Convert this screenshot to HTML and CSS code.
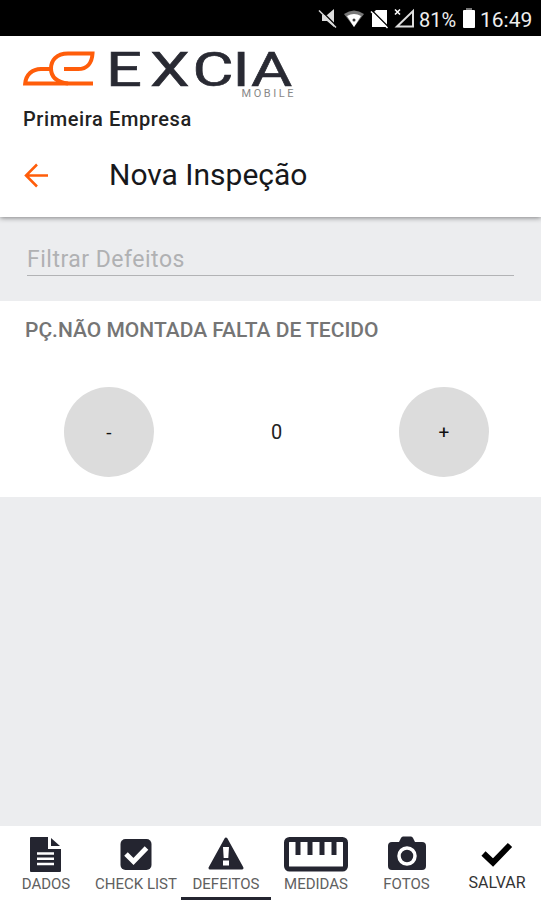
FILE: index.html
```html
<!DOCTYPE html>
<html lang="pt-BR">
  <head>
    <meta charset="UTF-8" />
    <meta name="viewport" content="width=device-width, initial-scale=1.0" />
    <title>Nova Inspeção</title>
    <link rel="stylesheet" href="styles.css">
  </head>
  <body>
    <div class="status-bar">
      <svg class="status-icons" width="99" height="24" viewBox="0 0 99 24">
        <path d="M3 7h5l7-6v18l-7-6H3z" fill="#ddd" />
        <path d="M1 1.500l17 17" stroke="#000" stroke-width="1.500" />
        <path d="M0 2.500l17 17" stroke="#ddd" stroke-width="1.500" />
        <path d="M25 6q10-7 20 0L35 19z" fill="#777" />
        <path d="M28 8q7-4 14 0l-7 11z" fill="#fff" />
        <circle cx="35" cy="12" r="1.5" fill="#333" />
        <path d="M57 2h11v17H53V6z" fill="#fff" />
        <path d="M53 2.500l17 17" stroke="#000" stroke-width="1.500" />
        <path d="M52 3.500l16.500 16.500" stroke="#fff" stroke-width="1.500" />
        <path d="M78 18.500L94 3v15.500z" fill="none" stroke="#ddd" stroke-width="2" />
        <path d="M76 1.500l5 5M81 1.500l-5 5" stroke="#fff" stroke-width="1.6" />
      </svg>
      <span class="battery-level">81%</span>
      <svg class="battery" width="12" height="20" viewBox="0 0 12 20">
        <path d="M3 0h6v3H3z" fill="#777" />
        <rect y="2" width="12" height="18" rx="1" fill="#fff" />
      </svg>
      <span class="clock">16:49</span>
    </div>

    <header class="header">
      <svg class="logo" width="290" height="52" viewBox="0 0 290 52">
        <g fill="none" stroke="#ff5d0a" stroke-width="4">
          <path d="M70 37.500H2.200C3 29 9 23 18 23h10" />
          <path d="M45 37.500C33 36 28 30 28 22.500S33 7.500 45 7.500h24.500C69 17 64 23 55 23H41" />
        </g>
        <g class="logo-name" transform="translate(0 39.500) scale(1.33 1)">
          <text x="62.500 95.500 127.500 157.500 171.500">EXCIA</text>
        </g>
        <text class="logo-sub" x="218.500" y="51" textLength="52">MOBILE</text>
      </svg>
      <p class="company">Primeira Empresa</p>
      <div class="title-row">
        <svg width="25" height="25" viewBox="0 0 25 25" fill="none" stroke="#ff5d0a" stroke-width="2.500">
          <path d="M13 1.500L2 12.500L13 23.500M2 12.500h22" />
        </svg>
        <h1>Nova Inspeção</h1>
      </div>
    </header>

    <main>
      <div class="filter">
        <input type="text" placeholder="Filtrar Defeitos" />
      </div>

      <section class="defect">
        <h2>PÇ.NÃO MONTADA FALTA DE TECIDO</h2>
        <div class="counter">
          <button onclick="changeCount(-1)">-</button>
          <span id="count">0</span>
          <button onclick="changeCount(1)">+</button>
        </div>
      </section>
    </main>

    <nav class="tabs">
      <div class="tab">
        <svg width="32" height="36" viewBox="0 0 32 36">
          <path d="M1 1h17v12h13v22q0 1-1 1H1q-1 0-1-1V2q0-1 1-1z" fill="#242530" />
          <path d="M21 2v8h9z" fill="#242530" />
          <path d="M7 17.500h17M7 22.800h17M7 28h17" stroke="#fff" stroke-width="2.500" />
        </svg>
        <span>DADOS</span>
      </div>
      <div class="tab">
        <svg width="32" height="36" viewBox="0 0 32 36">
          <rect x="0.500" y="3" width="31" height="31" rx="5" fill="#242530" />
          <path d="M6 18l7.500 7.500L26.500 12" fill="none" stroke="#fff" stroke-width="5" />
        </svg>
        <span>CHECK LIST</span>
      </div>
      <div class="tab active">
        <svg width="36" height="36" viewBox="0 0 36 36">
          <path d="M18 3L34 32H2z" fill="#242530" stroke="#242530" stroke-width="3" stroke-linejoin="round" />
          <path d="M15 11h6l-.7 11h-4.600zM15 24.500h6v5h-6z" fill="#fff" />
        </svg>
        <span>DEFEITOS</span>
      </div>
      <div class="tab">
        <svg width="64" height="36" viewBox="0 0 64 36">
          <rect x="2.500" y="3.500" width="59" height="29.500" rx="3" fill="#fff" stroke="#242530" stroke-width="5" />
          <path d="M14 4v15M26 4v15M38 4v15M50 4v15" stroke="#242530" stroke-width="5" />
        </svg>
        <span>MEDIDAS</span>
      </div>
      <div class="tab">
        <svg width="38" height="36" viewBox="0 0 38 36">
          <path d="M4 6h7l2-4q.6-1.500 2-1.500h8q1.400 0 2 1.500l2 4h7q4 0 4 4v20q0 4-4 4H4q-4 0-4-4V10q0-4 4-4z" fill="#242530" />
          <circle cx="19" cy="20" r="8" fill="none" stroke="#fff" stroke-width="3.500" />
        </svg>
        <span>FOTOS</span>
      </div>
      <div class="tab save">
        <svg width="32" height="36" viewBox="0 0 32 36">
          <path d="M2.500 17.500l9.500 9L29 9" fill="none" stroke="#000" stroke-width="6" />
        </svg>
        <span>SALVAR</span>
      </div>
    </nav>

    <script>
      let count = 0;

      function changeCount(step) {
        count = Math.max(0, count + step);
        document.getElementById("count").textContent = count;
      }
    </script>
  </body>
</html>
```
FILE: styles.css
```css
* {
  box-sizing: border-box;
}
body {
  margin: 0;
  height: 100vh;
  display: flex;
  flex-direction: column;
  overflow: hidden;
  font-family: Roboto, sans-serif;
  background-color: #ecedef;
}
svg {
  flex-shrink: 0;
  overflow: visible;
}
.status-bar {
  height: 36px;
  padding: 3px 8px 0 0;
  display: flex;
  align-items: center;
  justify-content: flex-end;
  background-color: #000;
  color: #eee;
  font-size: 20px;
}
.battery-level {
  width: 38px;
  margin-left: 1px;
  white-space: nowrap;
}
.battery {
  margin: 0 5px 3px 6px;
}
.clock {
  width: 53px;
  font-size: 21px;
}
.header {
  height: 181px;
  padding: 10px 23px 0;
  background-color: #fff;
  box-shadow: 0 1px 5px rgba(0, 0, 0, 0.45);
  z-index: 1;
}
.logo {
  display: block;
}
.logo-name {
  fill: #292a33;
  stroke: #292a33;
  stroke-width: 0.6px;
  font-size: 47.5px;
  font-weight: 400;
}
.logo-sub {
  fill: #888;
  font-size: 11px;
}
.company {
  margin: 9px 0 0;
  font-size: 20px;
  font-weight: 500;
  line-height: 24px;
  letter-spacing: 0.6px;
  color: #222;
}
.title-row {
  display: flex;
  align-items: center;
  gap: 60px;
  margin: 24px 0 0 1px;
}
.title-row h1 {
  margin: 0;
  font-size: 30px;
  font-weight: 400;
  line-height: 40px;
  color: #17181b;
}
main {
  flex: 1;
}
.filter {
  height: 84px;
  padding: 26px 27px 0;
}
.filter input {
  width: 487px;
  height: 33px;
  padding: 0;
  border: 0;
  border-bottom: 1px solid #b2b3b5;
  background: none;
  font-family: inherit;
  font-size: 23px;
  letter-spacing: 0.5px;
}
.filter input::placeholder {
  color: #b0b1b3;
}
.defect {
  height: 196px;
  padding: 17px 25px 0;
  background-color: #fff;
}
.defect h2 {
  margin: 0;
  font-size: 21px;
  font-weight: 500;
  line-height: 24px;
  color: #757575;
}
.counter {
  display: flex;
  align-items: center;
  justify-content: space-between;
  padding: 45px 27px 0 39px;
  font-size: 20px;
  color: #222;
}
.counter button {
  width: 90px;
  height: 90px;
  padding: 0;
  border: 0;
  border-radius: 50%;
  background-color: #dcdcdc;
  font-family: inherit;
  font-size: 19px;
  color: #111;
}
.tabs {
  height: 74px;
  padding-left: 1px;
  display: grid;
  grid-template-columns: repeat(4, 90px) 91px 90px;
  background-color: #fff;
}
.tab {
  display: flex;
  flex-direction: column;
  align-items: center;
  padding-top: 10px;
  font-size: 15px;
  line-height: 18px;
  white-space: nowrap;
  color: #606060;
}
.tab span {
  margin-top: 3px;
}
.tab.active {
  border-bottom: 3px solid #242530;
}
.save span {
  margin-top: 2px;
  font-size: 16px;
  color: #333;
}
```
